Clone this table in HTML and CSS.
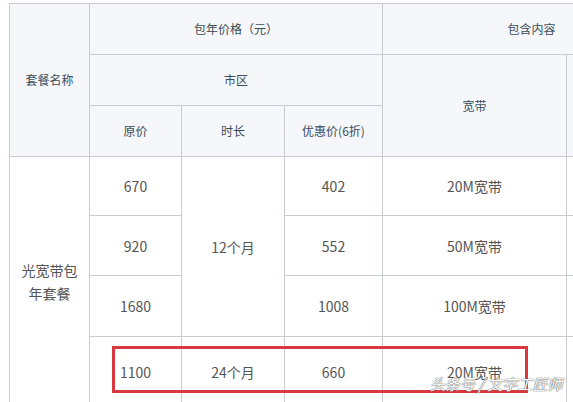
FILE: index.html
```html
<!DOCTYPE html>
<html lang="zh">
<head>
<meta charset="utf-8">
<link rel="stylesheet" href="styles.css">
</head>
<body>
<div class="wrap">
  <table class="price">
    <colgroup>
      <col class="c1"><col class="c2"><col class="c3"><col class="c4"><col class="c5"><col class="c6">
    </colgroup>
    <thead>
      <tr class="h1">
        <th rowspan="3">套餐名称</th>
        <th colspan="3">包年价格（元）</th>
        <th colspan="2">包含内容</th>
      </tr>
      <tr class="h2">
        <th colspan="3">市区</th>
        <th rowspan="2">宽带</th>
        <th rowspan="2"></th>
      </tr>
      <tr class="h3">
        <th>原价</th>
        <th>时长</th>
        <th>优惠价(6折)</th>
      </tr>
    </thead>
    <tbody>
      <tr class="r1">
        <td rowspan="4" class="pkg">光宽带包年套餐</td>
        <td>670</td>
        <td rowspan="3">12个月</td>
        <td>402</td>
        <td>20M宽带</td>
        <td></td>
      </tr>
      <tr class="r2">
        <td>920</td>
        <td>552</td>
        <td>50M宽带</td>
        <td></td>
      </tr>
      <tr class="r3">
        <td>1680</td>
        <td>1008</td>
        <td>100M宽带</td>
        <td></td>
      </tr>
      <tr class="r4">
        <td>1100</td>
        <td>24个月</td>
        <td>660</td>
        <td>20M宽带</td>
        <td></td>
      </tr>
    </tbody>
  </table>
  <div class="highlight"></div>
  <div class="watermark">头条号 / 文字工匠师</div>
</div>
</body>
</html>
```

FILE: styles.css
```css
html, body {
  margin: 0;
  padding: 0;
  background: #ffffff;
  overflow: hidden;
  width: 573px;
  height: 402px;
}
.wrap {
  position: relative;
  padding: 3px 0 0 9px;
  font-family: "Noto Sans CJK SC", "Noto Sans", sans-serif;
}
.price {
  border-collapse: collapse;
  table-layout: fixed;
  width: 671px;
}
.c1 { width: 80px; }
.c2 { width: 92px; }
.c3 { width: 103px; }
.c4 { width: 98px; }
.c5 { width: 184px; }
.c6 { width: 114px; }
.price th, .price td {
  border: 1px solid #c9cdd2;
  padding: 0 4px;
  text-align: center;
  vertical-align: middle;
  line-height: 20px;
}
.price th {
  background: #f5f7fb;
  color: #3b4c58;
  font-size: 12px;
  font-weight: normal;
}
.price td {
  background: #ffffff;
  color: #555555;
  font-size: 14px;
}
.h1, .h2, .h3 { height: 51px; }
.r1 { height: 59px; }
.r2 { height: 60px; }
.r3 { height: 61px; }
.r4 { height: 70px; }
.price .pkg {
  line-height: 23px;
  padding: 0 11px;
}
.highlight {
  position: absolute;
  left: 112px;
  top: 346px;
  width: 410px;
  height: 41px;
  border: 3px solid #d9383f;
}
.watermark {
  position: absolute;
  left: 430px;
  top: 374px;
  font-size: 15px;
  line-height: 20px;
  color: #ffffff;
  font-style: italic;
  white-space: nowrap;
  text-shadow: 0 0 1px #777, 0 0 1px #777, 0 0 1px #777;
}
```
